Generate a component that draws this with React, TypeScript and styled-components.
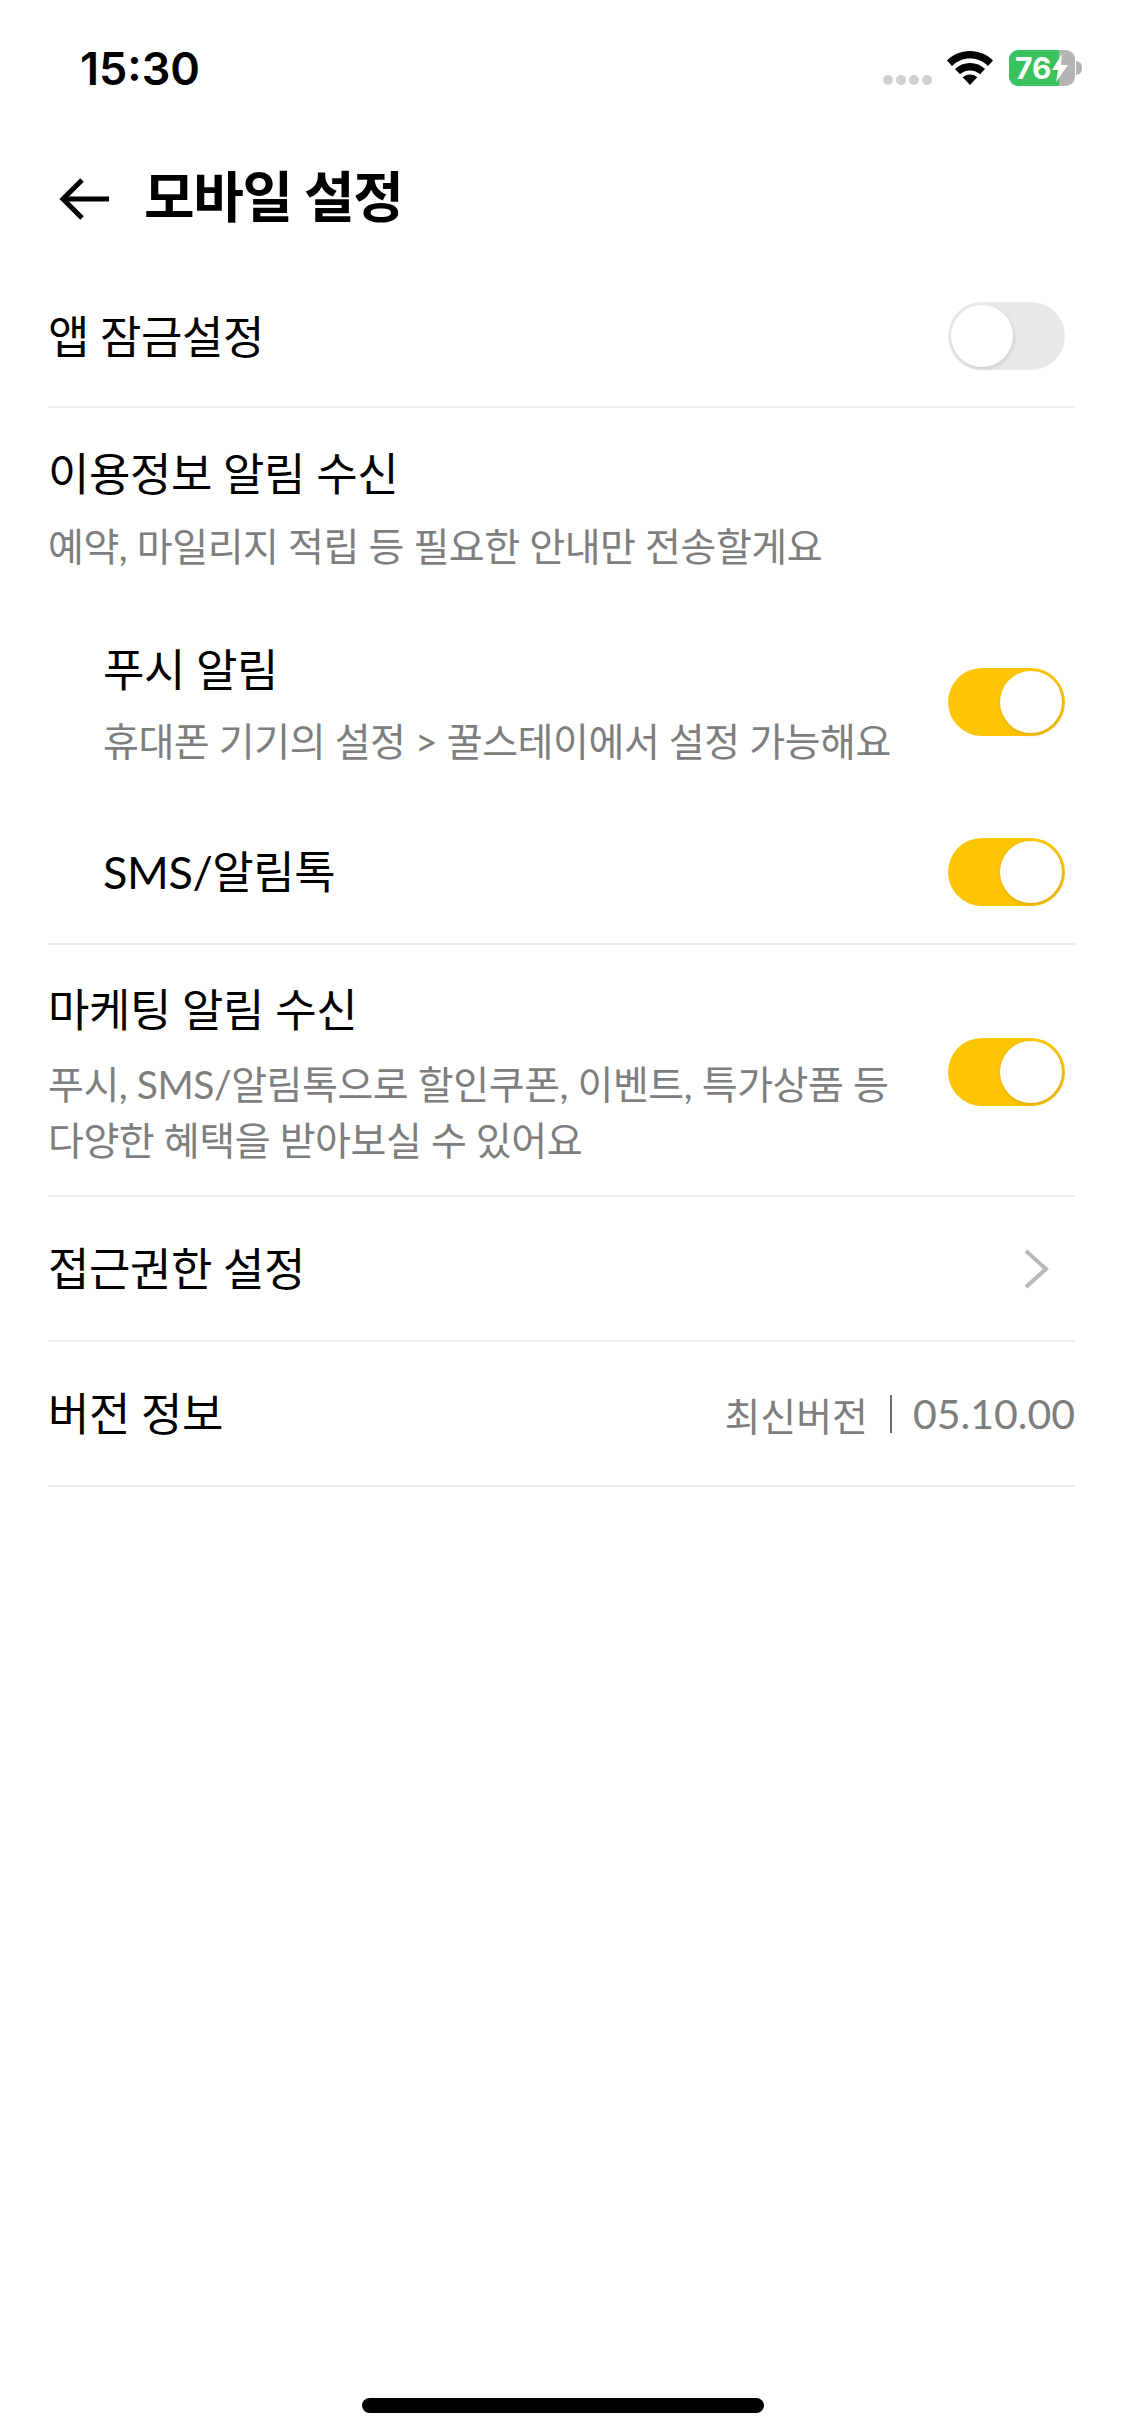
import styled, { createGlobalStyle } from "styled-components";

const GlobalStyle = createGlobalStyle`
  html, body {
    margin: 0;
    padding: 0;
    background: #fff;
  }
  body {
    font-family: Lato, "Noto Sans CJK KR", sans-serif;
    color: #000;
  }
`;

const Page = styled.div`
  width: 1125px;
  height: 2436px;
  display: flex;
  flex-direction: column;
  overflow: hidden;
  background: #fff;
`;

const StatusBar = styled.div`
  height: 136px;
  box-sizing: border-box;
  padding: 0 43px 0 80px;
  display: flex;
  align-items: center;
  justify-content: space-between;
`;

const Time = styled.span`
  font-family: Inter, sans-serif;
  font-size: 45px;
  font-weight: 600;
`;

const StatusIcons = styled.div`
  display: flex;
  align-items: center;
`;

const Dots = styled.div`
  display: flex;
  gap: 3px;
  margin: 24px 15px 0 0;
`;

const Dot = styled.i`
  width: 10px;
  height: 10px;
  border-radius: 50%;
  background: #cfcfcf;
`;

const Battery = styled.div`
  width: 66px;
  height: 36px;
  margin-left: 16px;
  border-radius: 9px;
  overflow: hidden;
  background: linear-gradient(90deg, #3cc25c 0 50px, #b5b5b5 50px);
  display: flex;
  align-items: center;
  padding-left: 6px;
  box-sizing: border-box;
  color: #fff;
  font-family: Inter, sans-serif;
  font-size: 30px;
  font-weight: 700;
`;

const BatteryNub = styled.i`
  width: 6px;
  height: 14px;
  margin-left: 1px;
  border-radius: 0 7px 7px 0;
  background: #b5b5b5;
`;

const Header = styled.div`
  height: 125px;
  padding-left: 59px;
  display: flex;
  align-items: center;
  gap: 35px;
`;

const Title = styled.h1`
  margin: 0;
  padding-bottom: 11px;
  font-size: 55px;
  font-weight: 700;
  letter-spacing: -1.300px;
`;

const List = styled.div`
  margin: 0 50px 0 48px;
`;

const Row = styled.div<{ $height?: number }>`
  min-height: ${({ $height }) => $height ?? 143}px;
  padding-right: 10px;
  display: flex;
  align-items: center;
  justify-content: space-between;
  border-bottom: 2px solid #ececec;
`;

const LockRow = styled(Row)`
  padding-top: 7px;
`;

const Label = styled.div`
  font-size: 45px;
  line-height: 60px;
  letter-spacing: -0.400px;
`;

const Sub = styled.div`
  font-size: 39px;
  line-height: 56px;
  color: #7e7e7e;
  letter-spacing: -0.450px;
`;

const Section = styled.div`
  padding: 36px 0 37px;
  border-bottom: 2px solid #ececec;
`;

const SectionSub = styled(Sub)`
  margin-top: 14px;
`;

const Indented = styled.div<{ $top: number }>`
  margin-top: ${({ $top }) => $top}px;
  padding: 0 10px 0 55px;
  display: flex;
  align-items: center;
  justify-content: space-between;
`;

const SubInner = styled(Sub)`
  margin-top: 13px;
`;

const MarketingRow = styled(Row)`
  padding-top: 35px;
  padding-bottom: 27px;
`;

const MarketingSub = styled(Sub)`
  margin-top: 16px;
`;

const Track = styled.div<{ $on: boolean; $lift: number }>`
  width: 117px;
  height: 68px;
  margin-bottom: ${({ $lift }) => $lift}px;
  flex-shrink: 0;
  box-sizing: border-box;
  padding: 3px;
  border-radius: 34px;
  display: flex;
  justify-content: ${({ $on }) => ($on ? "flex-end" : "flex-start")};
  background: ${({ $on }) => ($on ? "#fdc506" : "#e9e9e9")};
`;

const Knob = styled.div`
  width: 62px;
  height: 62px;
  border-radius: 50%;
  background: #fff;
  box-shadow: 1px 2px 4px rgba(0, 0, 0, 0.12);
`;

const Chevron = styled.svg`
  width: 26px;
  height: 40px;
  margin-right: 16px;
`;

const Version = styled.div`
  margin-right: -10px;
  display: flex;
  align-items: center;
  font-size: 39px;
  color: #7e7e7e;
`;

const VersionSep = styled.i`
  width: 2px;
  height: 38px;
  margin: 0 21px 0 22px;
  background: #6e6e6e;
`;

const VersionNumber = styled.span`
  font-size: 41px;
`;

const HomeIndicator = styled.div`
  width: 402px;
  height: 15px;
  margin: auto auto 23px;
  border-radius: 8px;
  background: #000;
`;

const Toggle = ({ on, lift = 0 }: { on: boolean; lift?: number }) => (
  <Track $on={on} $lift={lift}>
    <Knob />
  </Track>
);

export default function App() {
  return (
    <Page>
      <GlobalStyle />
      <StatusBar>
        <Time>15:30</Time>
        <StatusIcons>
          <Dots>
            <Dot />
            <Dot />
            <Dot />
            <Dot />
          </Dots>
          <svg width="46" height="34" viewBox="0 0 46 34">
            <path d="M23 0C14 0 6 3.500 0 9.500l5 5.500C10 10 16 7.500 23 7.500S36 10 41 15l5-5.500C40 3.500 32 0 23 0z" />
            <path d="M23 12c-6 0-11 2.300-15 6l5 5.300c2.600-2.400 6-3.800 10-3.800s7.400 1.400 10 3.800l5-5.300c-4-3.700-9-6-15-6z" />
            <path d="M23 23.500c-3 0-5.500 1.100-7.300 2.800L23 34l7.300-7.700c-1.800-1.700-4.300-2.800-7.300-2.800z" />
          </svg>
          <Battery>
            76
            <svg width="18" height="28" viewBox="0 0 18 28">
              <path d="M11 0L1 16h6l-2 12L17 11h-7z" fill="#fff" />
            </svg>
          </Battery>
          <BatteryNub />
        </StatusIcons>
      </StatusBar>

      <Header>
        <svg width="50" height="46" viewBox="0 0 50 46" fill="none" stroke="#000" strokeWidth="5">
          <path d="M50 23H4" />
          <path d="M23 4L4 23l19 19" />
        </svg>
        <Title>모바일 설정</Title>
      </Header>

      <List>
        <LockRow $height={138}>
          <Label>앱 잠금설정</Label>
          <Toggle on={false} lift={3} />
        </LockRow>

        <Section>
          <Label>이용정보 알림 수신</Label>
          <SectionSub>예약, 마일리지 적립 등 필요한 안내만 전송할게요</SectionSub>
          <Indented $top={66}>
            <div>
              <Label>푸시 알림</Label>
              <SubInner>휴대폰 기기의 설정 &gt; 꿀스테이에서 설정 가능해요</SubInner>
            </div>
            <Toggle on lift={6} />
          </Indented>
          <Indented $top={69}>
            <Label>SMS/알림톡</Label>
            <Toggle on />
          </Indented>
        </Section>

        <MarketingRow>
          <div>
            <Label>마케팅 알림 수신</Label>
            <MarketingSub>
              푸시, SMS/알림톡으로 할인쿠폰, 이벤트, 특가상품 등
              <br />
              다양한 혜택을 받아보실 수 있어요
            </MarketingSub>
          </div>
          <Toggle on lift={4} />
        </MarketingRow>

        <Row>
          <Label>접근권한 설정</Label>
          <Chevron viewBox="0 0 26 40" fill="none" stroke="#b9b9b9" strokeWidth="4">
            <path d="M3 2l20 18L3 38" />
          </Chevron>
        </Row>

        <Row>
          <Label>버전 정보</Label>
          <Version>
            최신버전
            <VersionSep />
            <VersionNumber>05.10.00</VersionNumber>
          </Version>
        </Row>
      </List>

      <HomeIndicator />
    </Page>
  );
}
